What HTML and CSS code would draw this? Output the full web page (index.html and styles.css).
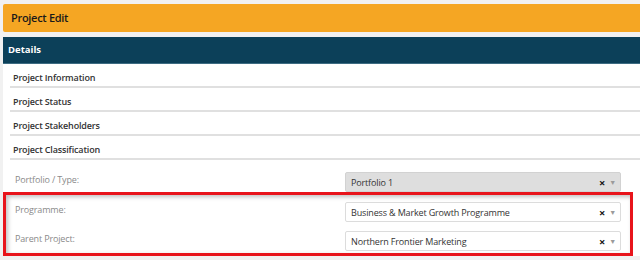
FILE: index.html
```html
<!DOCTYPE html>
<html lang="en">
<head>
  <meta charset="UTF-8" />
  <title>Project Edit</title>
  <link rel="stylesheet" href="styles.css">
</head>
<body>
  <div class="page-title">Project Edit</div>

  <div class="panel">
    <div class="panel-head">Details</div>
    <div class="panel-body">
      <div class="section">Project Information</div>
      <div class="section">Project Status</div>
      <div class="section">Project Stakeholders</div>
      <div class="section">Project Classification</div>

      <div class="fields">
        <div class="field">
          <label>Portfolio / Type:</label>
          <div class="combo disabled">
            <span class="value">Portfolio 1</span>
            <span class="clear">&times;</span>
            <span class="arrow">&#9660;</span>
          </div>
        </div>

        <div class="highlight">
          <div class="field">
            <label>Programme:</label>
            <div class="combo">
              <span class="value">Business &amp; Market Growth Programme</span>
              <span class="clear">&times;</span>
              <span class="arrow">&#9660;</span>
            </div>
          </div>
          <div class="field">
            <label>Parent Project:</label>
            <div class="combo">
              <span class="value">Northern Frontier Marketing</span>
              <span class="clear">&times;</span>
              <span class="arrow">&#9660;</span>
            </div>
          </div>
        </div>
      </div>
    </div>
  </div>
</body>
</html>
```

FILE: styles.css
```css
body {
  margin: 0;
  padding: 4px 0 0 3px;
  height: 260px;
  box-sizing: border-box;
  overflow: hidden;
  background: #f1f1f1;
  font-family: "Open Sans", "Noto Sans", sans-serif;
  color: #333;
}
.page-title {
  height: 28px;
  line-height: 28px;
  padding-left: 8px;
  background: #f5a623;
  border-radius: 2px 0 0 2px;
  color: #1a1a1a;
  font-size: 11px;
  font-weight: 600;
  letter-spacing: -0.3px;
}
.panel {
  margin-top: 5px;
  background: #fff;
}
.panel-head {
  height: 26px;
  line-height: 26px;
  padding-left: 5px;
  background: #0c4059;
  border-bottom: 1px solid #3d6c82;
  color: #fff;
  font-size: 9.5px;
  font-weight: 700;
}
.section {
  margin-left: 7px;
  padding: 8px 0 2px 3px;
  height: 12px;
  line-height: 12px;
  border-bottom: 2px solid #e0e0e0;
  font-size: 9px;
  font-weight: 600;
  letter-spacing: -0.15px;
  color: #333;
}
.fields {
  padding-top: 12px;
}
.field {
  display: grid;
  grid-template-columns: 330px 276px;
  padding-left: 12px;
}
.field label {
  padding-top: 2px;
  font-size: 9px;
  line-height: 12px;
  letter-spacing: -0.15px;
  color: #8a8a8a;
}
.combo {
  display: flex;
  align-items: center;
  height: 20px;
  box-sizing: border-box;
  padding: 0 4px 0 5px;
  background: #fff;
  border: 1px solid #dcdcdc;
  border-radius: 2px;
  font-size: 9px;
  letter-spacing: -0.15px;
}
.combo.disabled {
  background: #dedede;
  border-color: #d2d2d2;
}
.combo .value {
  flex: 1;
  color: #333;
}
.combo .clear {
  font-size: 11px;
  font-weight: 700;
  color: #111;
  margin-right: 4px;
}
.combo .arrow {
  font-size: 7px;
  color: #9a9a9a;
}
.highlight {
  margin: 0 7px 0 0;
  padding: 7px 0 2px;
  border: 3px solid #e8141b;
  box-shadow: inset 2px 2px 4px rgba(0, 0, 0, 0.25);
}
.highlight .field {
  padding-left: 9px;
}
.highlight .field + .field {
  margin-top: 9px;
}
```
